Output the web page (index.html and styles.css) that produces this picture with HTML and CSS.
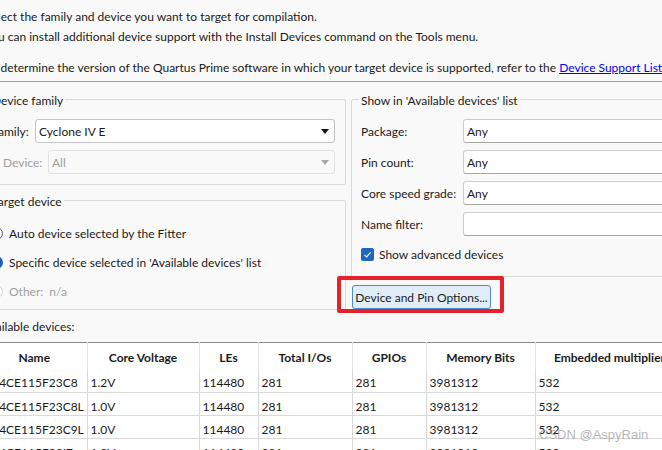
FILE: index.html
```html
<!DOCTYPE html>
<html>
<head>
<meta charset="utf-8">
<title>New Project Wizard - Family, Device &amp; Board Settings</title>
<link rel="stylesheet" href="styles.css">
</head>
<body>
<div class="dialog">
  <div class="intro">
    <p class="line">Select the family and device you want to target for compilation.</p>
    <p class="line">You can install additional device support with the Install Devices command on the Tools menu.</p>
    <p class="line gap">To determine the version of the Quartus Prime software in which your target device is supported, refer to the <a href="#">Device Support List</a> webpage.</p>
  </div>
  <div class="sep"></div>

  <div class="main">
    <div class="col-left">
      <fieldset class="group g-family">
        <legend>Device family</legend>
        <div class="row">
          <span class="lbl w-family">Family:</span>
          <div class="combo"><span class="val">Cyclone IV E</span><span class="arrow"></span></div>
        </div>
        <div class="row r-device">
          <span class="lbl dis w-device">Device:</span>
          <div class="combo disabled"><span class="val">All</span><span class="arrow"></span></div>
        </div>
      </fieldset>

      <fieldset class="group g-target">
        <legend>Target device</legend>
        <div class="radio"><span class="rb"></span><span>Auto device selected by the Fitter</span></div>
        <div class="radio"><span class="rb on"></span><span>Specific device selected in 'Available devices' list</span></div>
        <div class="radio dis"><span class="rb"></span><span class="other">Other:</span><span>n/a</span></div>
      </fieldset>
    </div>

    <div class="col-right">
      <fieldset class="group g-show">
        <legend>Show in 'Available devices' list</legend>
        <div class="row"><span class="lbl w-show">Package:</span><div class="field"><span class="val">Any</span></div></div>
        <div class="row r-next"><span class="lbl w-show">Pin count:</span><div class="field"><span class="val">Any</span></div></div>
        <div class="row r-next"><span class="lbl w-show">Core speed grade:</span><div class="field"><span class="val">Any</span></div></div>
        <div class="row r-next"><span class="lbl w-show">Name filter:</span><div class="field edit"></div></div>
        <div class="check-row">
          <span class="cb"><svg width="13" height="13" viewBox="0 0 13 13"><path d="M3.5 6.8 L5.6 8.9 L9.6 4.3" fill="none" stroke="#fff" stroke-width="1.1"/></svg></span>
          <span>Show advanced devices</span>
        </div>
      </fieldset>
      <div class="btn-wrap">
        <button class="btn" type="button">Device and Pin Options...</button>
        <span class="mark"></span>
      </div>
    </div>
  </div>

  <div class="avail">Available devices:</div>

  <table class="devices">
    <colgroup>
      <col class="c-name"><col class="c-volt"><col class="c-les"><col class="c-io"><col class="c-gpio"><col class="c-mem"><col class="c-mult">
    </colgroup>
    <thead>
      <tr><th>Name</th><th>Core Voltage</th><th>LEs</th><th>Total I/Os</th><th>GPIOs</th><th>Memory Bits</th><th>Embedded multiplier 9-bit elements</th></tr>
    </thead>
    <tbody>
      <tr><td>EP4CE115F23C8</td><td>1.2V</td><td>114480</td><td>281</td><td>281</td><td>3981312</td><td>532</td></tr>
      <tr><td>EP4CE115F23C8L</td><td>1.0V</td><td>114480</td><td>281</td><td>281</td><td>3981312</td><td>532</td></tr>
      <tr><td>EP4CE115F23C9L</td><td>1.0V</td><td>114480</td><td>281</td><td>281</td><td>3981312</td><td>532</td></tr>
      <tr><td>EP4CE115F23I7</td><td>1.2V</td><td>114480</td><td>281</td><td>281</td><td>3981312</td><td>532</td></tr>
    </tbody>
  </table>
</div>
<div class="watermark">CSDN @AspyRain</div>
</body>
</html>
```

FILE: styles.css
```css
* { box-sizing: border-box; }

html, body { margin: 0; padding: 0; }

body {
  position: relative;
  width: 662px;
  height: 450px;
  overflow: hidden;
  background: #f9f9f9;
  font-family: Lato, "Liberation Sans", sans-serif;
  font-size: 12px;
  color: #1b1b1b;
}

.dialog {
  margin-left: -18px;
  width: 900px;
}

/* intro text */
.intro {
  padding: 7px 0 0 3px;
  white-space: nowrap;
}
.line { margin: 0; line-height: 20px; }
.line.gap { margin-top: 11px; }
.intro a { color: #0000ff; text-decoration: underline; }

.sep {
  height: 1px;
  margin-top: 3px;
  background: #a3a3a3;
  width: 700px;
}

/* main two-column area */
.main {
  display: flex;
  gap: 5px;
  margin-top: 7px;
}
.col-left { width: 364px; display: flex; flex-direction: column; }
.col-right { width: 430px; display: flex; flex-direction: column; align-items: flex-start; }

.group {
  margin: 0;
  min-width: 0;
  border: 1px solid #dadada;
  border-radius: 2px;
  padding: 10px 10px 10px 9px;
}
.group legend {
  padding: 4px 2px 0;
  margin-left: -2px;
  line-height: 16px;
}

.row {
  display: flex;
  align-items: center;
  height: 24px;
}
.r-device { margin-top: 7px; padding-left: 11px; }
.r-next { margin-top: 7px; }

.lbl { flex: none; white-space: nowrap; padding-top: 1px; }
.w-family { width: 43px; }
.w-device { width: 45px; }
.w-show { width: 102px; }
.dis { color: #a0a0a0; }
.val { padding-top: 1px; }

.combo {
  flex: 1;
  height: 24px;
  display: flex;
  align-items: center;
  padding-left: 3px;
  background: #ffffff;
  border: 1px solid #c4c4c4;
  border-radius: 3px;
}
.combo .arrow {
  margin-left: auto;
  margin-right: 5px;
  width: 0;
  height: 0;
  border-left: 4px solid transparent;
  border-right: 4px solid transparent;
  border-top: 5px solid #111;
}
.combo.disabled {
  background: #f9f9f9;
  border-color: #e2e2e2;
  color: #a0a0a0;
}
.combo.disabled .arrow { border-top-color: #a8a8a8; }

.g-show { width: 100%; padding-bottom: 12px; }
.g-target { margin-top: 5px; padding-top: 13px; padding-bottom: 8px; }

.field {
  flex: 1;
  height: 24px;
  display: flex;
  align-items: center;
  padding-left: 3px;
  background: #ffffff;
  border: 1px solid #cdcdcd;
  border-bottom-color: #a6a6a6;
  border-radius: 3px;
}

/* radios */
.radio {
  display: flex;
  align-items: center;
  height: 20px;
  margin-left: -2px;
}
.radio + .radio { margin-top: 9px; }
.rb {
  flex: none;
  width: 13px;
  height: 13px;
  margin-right: 6px;
  border-radius: 50%;
  border: 1px solid #5c5c5c;
  background: #ffffff;
}
.rb.on {
  border: 4px solid #1a5fb4;
  background: #ffffff;
}
.radio.dis { color: #a0a0a0; }
.radio.dis .rb { border-color: #cfcfcf; }
.other { margin-right: 6px; }

/* checkbox */
.check-row {
  display: flex;
  align-items: center;
  height: 20px;
  margin-top: 8px;
}
.check-row span + span { padding-top: 1px; }
.cb {
  flex: none;
  width: 13px;
  height: 13px;
  margin-right: 5px;
  border-radius: 2px;
  background: #1f66c1;
  display: flex;
}

/* button with red highlight */
.btn-wrap {
  position: relative;
  margin-top: 8px;
  margin-left: 1px;
}
.btn {
  display: block;
  width: 139px;
  height: 24px;
  padding: 1px 0 0;
  font: inherit;
  color: #1b1b1b;
  background: #e1eefa;
  border: 1px solid #4a8bd0;
  border-radius: 3px;
}
.mark {
  position: absolute;
  left: -15px;
  top: -9px;
  width: 167px;
  height: 37px;
  border: 4px solid #e5212b;
  border-radius: 2px;
}

.avail {
  margin-top: 9px;
  line-height: 16px;
}

/* table */
.devices {
  margin-top: 7px;
  border-collapse: collapse;
  table-layout: fixed;
  width: 782px;
  background: #ffffff;
  border-top: 1px solid #8a8a8a;
}
.c-name { width: 105px; }
.c-volt { width: 112px; }
.c-les { width: 59px; }
.c-io { width: 94px; }
.c-gpio { width: 74px; }
.c-mem { width: 109px; }
.c-mult { width: 229px; }

.devices th {
  height: 27px;
  padding: 3px 0 0;
  font-weight: bold;
  text-align: center;
  white-space: nowrap;
  overflow: hidden;
  border-right: 1px solid #e4e4e4;
}
.devices td {
  height: 23px;
  padding: 4px 0 0 3px;
  white-space: nowrap;
  overflow: hidden;
  border-right: 1px solid #d9d9d9;
  border-bottom: 1px solid #d9d9d9;
}

.watermark {
  position: absolute;
  left: 539px;
  top: 427px;
  font-family: "Liberation Sans", Arial, sans-serif;
  font-size: 13px;
  color: rgba(150, 150, 150, 0.7);
  white-space: nowrap;
}
```
